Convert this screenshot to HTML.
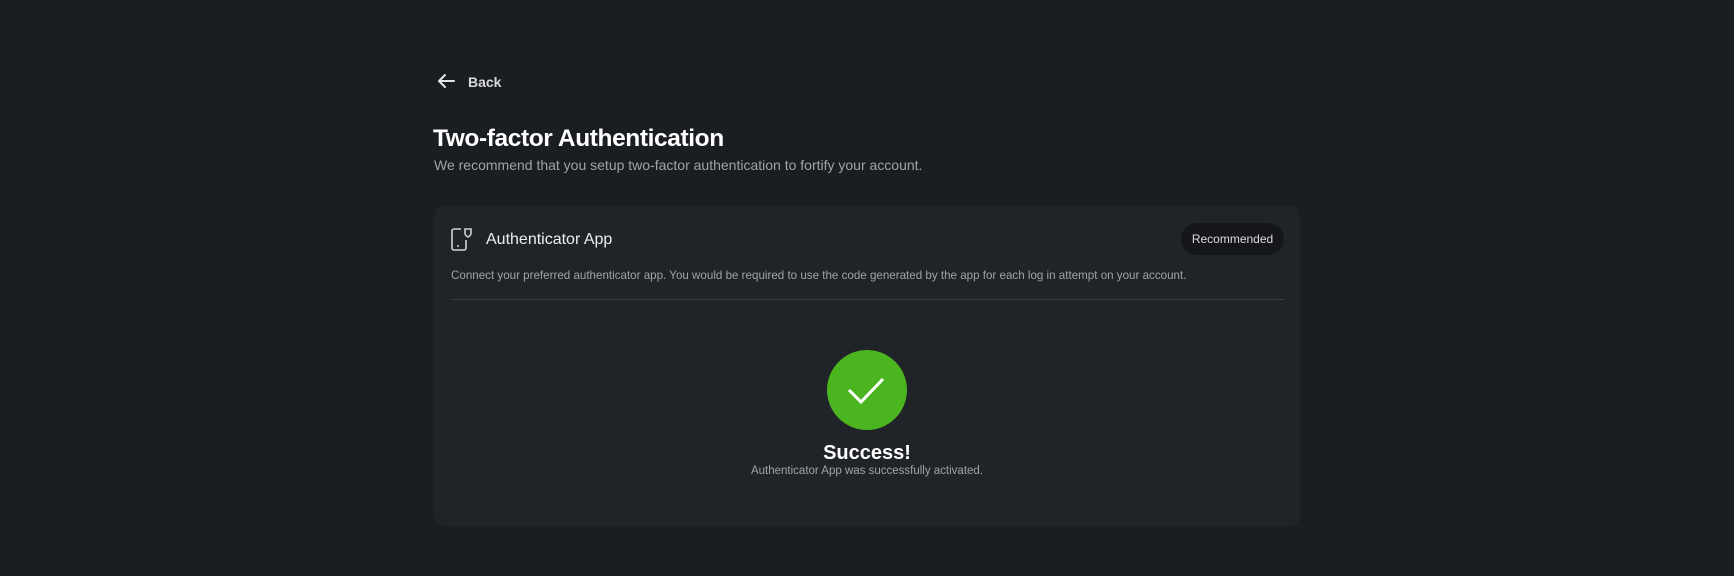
<!DOCTYPE html>
<html><head><meta charset="utf-8"><style>
*{margin:0;padding:0;box-sizing:border-box}
body{width:1734px;height:576px;background:#1a1d21;font-family:"Liberation Sans",sans-serif;position:relative;overflow:hidden;color:#fff}
.a{position:absolute;white-space:nowrap}
</style></head><body>
<svg class="a" style="left:436px;top:73px" width="20" height="16" viewBox="0 0 20 16"><path d="M18 8H3M9 2L3 8l6 6" stroke="#e6e6e6" stroke-width="2" fill="none" stroke-linecap="round" stroke-linejoin="round"/></svg>
<div class="a" style="left:468px;top:74px;font-size:14px;font-weight:bold;color:#d9d9d9">Back</div>
<div class="a" style="left:433px;top:125px;font-size:24.5px;font-weight:bold;letter-spacing:-0.4px">Two-factor Authentication</div>
<div class="a" style="left:434px;top:157px;font-size:14px;color:#a0a3a8">We recommend that you setup two-factor authentication to fortify your account.</div>
<div class="a" style="left:434px;top:206px;width:866px;height:320px;background:#202328;border-radius:10px"></div>
<svg class="a" style="left:450px;top:227px" width="24" height="25" viewBox="0 0 24 25"><path d="M11 2H4a2 2 0 0 0-2 2v17a2 2 0 0 0 2 2h10a2 2 0 0 0 2-2v-8" stroke="#cfd1d4" stroke-width="1.6" fill="none"/><path d="M15 2h6v4c0 2.5-3 4-3 4s-3-1.5-3-4z" stroke="#cfd1d4" stroke-width="1.6" fill="none"/><circle cx="8" cy="19" r="1" fill="#cfd1d4"/></svg>
<div class="a" style="left:486px;top:231px;font-size:16px;color:#eee">Authenticator App</div>
<div class="a" style="left:1181px;top:223px;width:103px;height:32px;border-radius:16px;background:#141619;font-size:12px;color:#ddd;text-align:center;line-height:32px">Recommended</div>
<div class="a" style="left:451px;top:269px;font-size:11.6px;color:#a0a3a8">Connect your preferred authenticator app. You would be required to use the code generated by the app for each log in attempt on your account.</div>
<div class="a" style="left:451px;top:299px;width:833px;height:1px;background:#3b3e44"></div>
<svg class="a" style="left:827px;top:350px" width="80" height="80" viewBox="0 0 80 80"><circle cx="40" cy="40" r="40" fill="#4bb520"/><path d="M22 40l12 12 22-23" stroke="#fff" stroke-width="3" fill="none"/></svg>
<div class="a" style="left:0;width:1734px;text-align:center;top:442px;font-size:20px;font-weight:bold">Success!</div>
<div class="a" style="left:0;width:1734px;text-align:center;top:465px;font-size:11.5px;color:#a0a3a8">Authenticator App was successfully activated.</div>
</body></html>
